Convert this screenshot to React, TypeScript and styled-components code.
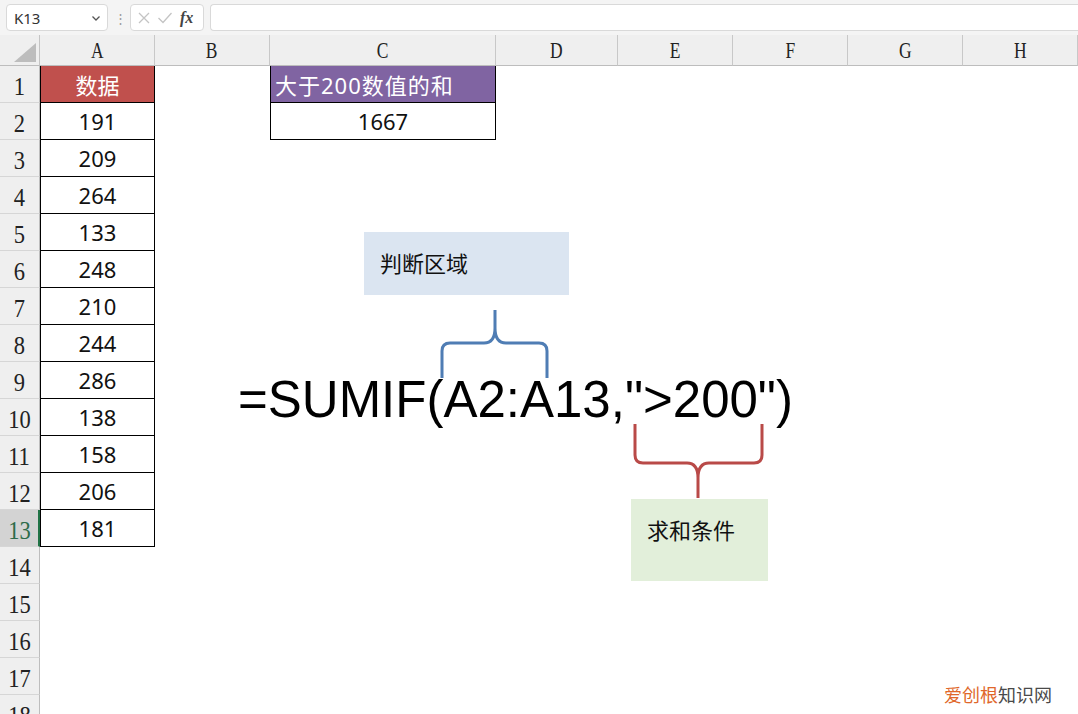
import React from "react";
import styled, { createGlobalStyle } from "styled-components";

const GlobalStyle = createGlobalStyle`
  html, body {
    margin: 0;
    padding: 0;
    background: #ffffff;
    overflow: hidden;
  }
  * { box-sizing: border-box; }
`;

const COLS = ["A", "B", "C", "D", "E", "F", "G", "H"];
const COL_WIDTHS = [115, 115, 226, 122, 115, 115, 115, 115];
const ROW_COUNT = 18;
const VALUES = [191, 209, 264, 133, 248, 210, 244, 286, 138, 158, 206, 181];

const Page = styled.div`
  position: relative;
  width: 1078px;
  height: 714px;
  overflow: hidden;
  font-family: "Noto Sans", "Noto Sans CJK SC", sans-serif;
`;

const Toolbar = styled.div`
  display: flex;
  align-items: center;
  height: 35px;
  padding: 3px 0 3px 6px;
  gap: 6px;
  background: #f4f4f4;
`;

const NameBox = styled.div`
  display: flex;
  align-items: center;
  justify-content: space-between;
  width: 102px;
  height: 27px;
  padding: 0 6px 0 7px;
  background: #fff;
  border: 1px solid #d9d9d9;
  border-radius: 4px;
  font-family: "Noto Sans", sans-serif;
  font-size: 15px;
  color: #333;
`;

const Dots = styled.div`
  width: 10px;
  text-align: center;
  color: #9a9a9a;
  font-size: 13px;
`;

const FxBox = styled.div`
  display: flex;
  align-items: center;
  gap: 6px;
  width: 74px;
  height: 27px;
  padding: 0 6px;
  background: #fff;
  border: 1px solid #d9d9d9;
  border-radius: 4px;
`;

const FxLabel = styled.span`
  font-family: "Liberation Serif", serif;
  font-style: italic;
  font-weight: bold;
  font-size: 16px;
  color: #444;
  margin-left: 1px;
`;

const FormulaInput = styled.div`
  flex: 1;
  height: 27px;
  background: #fff;
  border: 1px solid #d9d9d9;
  border-right: none;
  border-radius: 4px 0 0 4px;
`;

const Grid = styled.div`
  display: grid;
  grid-template-columns: 40px ${COL_WIDTHS.map((w) => `${w}px`).join(" ")};
  grid-template-rows: 31px repeat(${ROW_COUNT}, 37px);
`;

const Corner = styled.div`
  background: #efefef;
  border-right: 1px solid #c4c4c4;
  border-bottom: 1px solid #bdbdbd;
  display: flex;
  align-items: flex-end;
  justify-content: flex-end;
  padding: 0 3px 3px 0;
`;

const ColHeader = styled.div`
  background: #efefef;
  border-right: 1px solid #c8c8c8;
  border-bottom: 1px solid #bdbdbd;
  display: flex;
  align-items: flex-end;
  justify-content: center;
  padding-bottom: 1px;
  font-family: "Liberation Serif", serif;
  font-size: 23px;
  line-height: 27px;
  color: #222;
  span { display: inline-block; transform: scaleX(0.76); }
`;

const RowHeader = styled.div<{ $active?: boolean }>`
  background: ${(p) => (p.$active ? "#d3d3d3" : "#efefef")};
  border-right: ${(p) => (p.$active ? "2px solid #217346" : "1px solid #bdbdbd")};
  border-bottom: 1px solid #d6d6d6;
  display: flex;
  align-items: flex-end;
  justify-content: center;
  padding-bottom: 1px;
  font-family: "Liberation Serif", serif;
  font-size: 25px;
  line-height: 28px;
  color: ${(p) => (p.$active ? "#2e6b4a" : "#222")};
  span { display: inline-block; transform: scaleX(0.9); }
`;

const Cell = styled.div<{ $fill?: string; $bordered?: boolean; $left?: boolean; $light?: boolean }>`
  background: ${(p) => p.$fill || "#fff"};
  border-left: ${(p) => (p.$bordered ? "1px solid #000" : "none")};
  border-right: ${(p) => (p.$bordered ? "1px solid #000" : "none")};
  border-bottom: ${(p) => (p.$bordered ? "1px solid #000" : "none")};
  display: flex;
  align-items: center;
  justify-content: ${(p) => (p.$left ? "flex-start" : "center")};
  padding: ${(p) => (p.$left ? "0 0 0 4px" : "0")};
  font-family: "Noto Sans", "Noto Sans CJK SC", sans-serif;
  font-size: 22px;
  letter-spacing: ${(p) => (p.$left ? "1px" : "0")};
  color: ${(p) => (p.$light ? "#fff" : "#111")};
`;

const Overlay = styled.div`
  position: absolute;
  inset: 0;
  pointer-events: none;
`;

const Callout = styled.div<{ $bg: string; $x: number; $y: number; $w: number; $h: number }>`
  position: absolute;
  left: ${(p) => p.$x}px;
  top: ${(p) => p.$y}px;
  width: ${(p) => p.$w}px;
  height: ${(p) => p.$h}px;
  background: ${(p) => p.$bg};
  padding: 14px 0 0 16px;
  font-family: "Noto Sans CJK SC", sans-serif;
  font-size: 22px;
  line-height: 32px;
  color: #111;
`;

const Formula = styled.div`
  position: absolute;
  left: 238px;
  top: 374px;
  font-family: "Liberation Sans", Arial, sans-serif;
  font-size: 51px;
  line-height: 52px;
  color: #000;
  white-space: nowrap;
`;

const Braces = styled.svg`
  position: absolute;
  left: 0;
  top: 0;
`;

const Watermark = styled.div`
  position: absolute;
  right: 26px;
  bottom: 8px;
  font-family: "Noto Sans CJK SC", sans-serif;
  font-size: 18px;
  line-height: 24px;
  color: #4a4a4a;
  span { color: #e0672a; }
`;

const CrossIcon = () => (
  <svg width="14" height="14" viewBox="0 0 14 14">
    <path d="M2 2 L12 12 M12 2 L2 12" stroke="#c4c4c4" strokeWidth="1.3" fill="none" />
  </svg>
);

const CheckIcon = () => (
  <svg width="16" height="14" viewBox="0 0 16 14">
    <path d="M1.5 7 L6 11.5 L14.5 2" stroke="#c4c4c4" strokeWidth="1.3" fill="none" />
  </svg>
);

const Chevron = () => (
  <svg width="10" height="10" viewBox="0 0 10 10">
    <path d="M1.5 3.5 L5 7 L8.5 3.5" stroke="#555" strokeWidth="1.3" fill="none" />
  </svg>
);

const SelectAll = () => (
  <svg width="22" height="19" viewBox="0 0 22 19">
    <polygon points="22,0 22,19 0,19" fill="#bdbdbd" />
  </svg>
);

const renderCell = (row: number, col: number) => {
  const key = `${row}-${col}`;
  if (col === 0) {
    if (row === 1) return <Cell key={key} $fill="#c0504d" $bordered $light>数据</Cell>;
    if (row <= 13) return <Cell key={key} $bordered>{VALUES[row - 2]}</Cell>;
  }
  if (col === 2) {
    if (row === 1) return <Cell key={key} $fill="#8064a2" $bordered $left $light>大于200数值的和</Cell>;
    if (row === 2) return <Cell key={key} $bordered>1667</Cell>;
  }
  return <Cell key={key} />;
};

const App = () => {
  const rows = Array.from({ length: ROW_COUNT }, (_, i) => i + 1);

  return (
    <Page>
      <GlobalStyle />
      <Toolbar>
        <NameBox>
          K13
          <Chevron />
        </NameBox>
        <Dots>⋮</Dots>
        <FxBox>
          <CrossIcon />
          <CheckIcon />
          <FxLabel>fx</FxLabel>
        </FxBox>
        <FormulaInput />
      </Toolbar>

      <Grid>
        <Corner>
          <SelectAll />
        </Corner>
        {COLS.map((c) => (
          <ColHeader key={c}>
            <span>{c}</span>
          </ColHeader>
        ))}
        {rows.map((r) => (
          <React.Fragment key={r}>
            <RowHeader $active={r === 13}>
              <span>{r}</span>
            </RowHeader>
            {COLS.map((_, ci) => renderCell(r, ci))}
          </React.Fragment>
        ))}
      </Grid>

      <Overlay>
        <Callout $bg="#dbe5f1" $x={364} $y={232} $w={205} $h={63}>判断区域</Callout>
        <Callout $bg="#e2efda" $x={631} $y={499} $w={137} $h={82}>求和条件</Callout>

        <Braces width="1078" height="714" viewBox="0 0 1078 714">
          <path
            d="M442 378 L442 351 Q442 343 450 343 L484 343 Q495 343 495 328 L495 310 M495 328 Q495 343 506 343 L539 343 Q547 343 547 351 L547 378"
            stroke="#4f7db4"
            strokeWidth="3"
            fill="none"
          />
          <path
            d="M635 424 L635 455 Q635 463 643 463 L687 463 Q698 463 698 478 L698 498 M698 478 Q698 463 709 463 L754 463 Q762 463 762 455 L762 424"
            stroke="#b94a48"
            strokeWidth="3"
            fill="none"
          />
        </Braces>

        <Formula>=SUMIF(A2:A13,"&gt;200")</Formula>

        <Watermark>
          <span>爱创根</span>知识网
        </Watermark>
      </Overlay>
    </Page>
  );
};

export default App;
